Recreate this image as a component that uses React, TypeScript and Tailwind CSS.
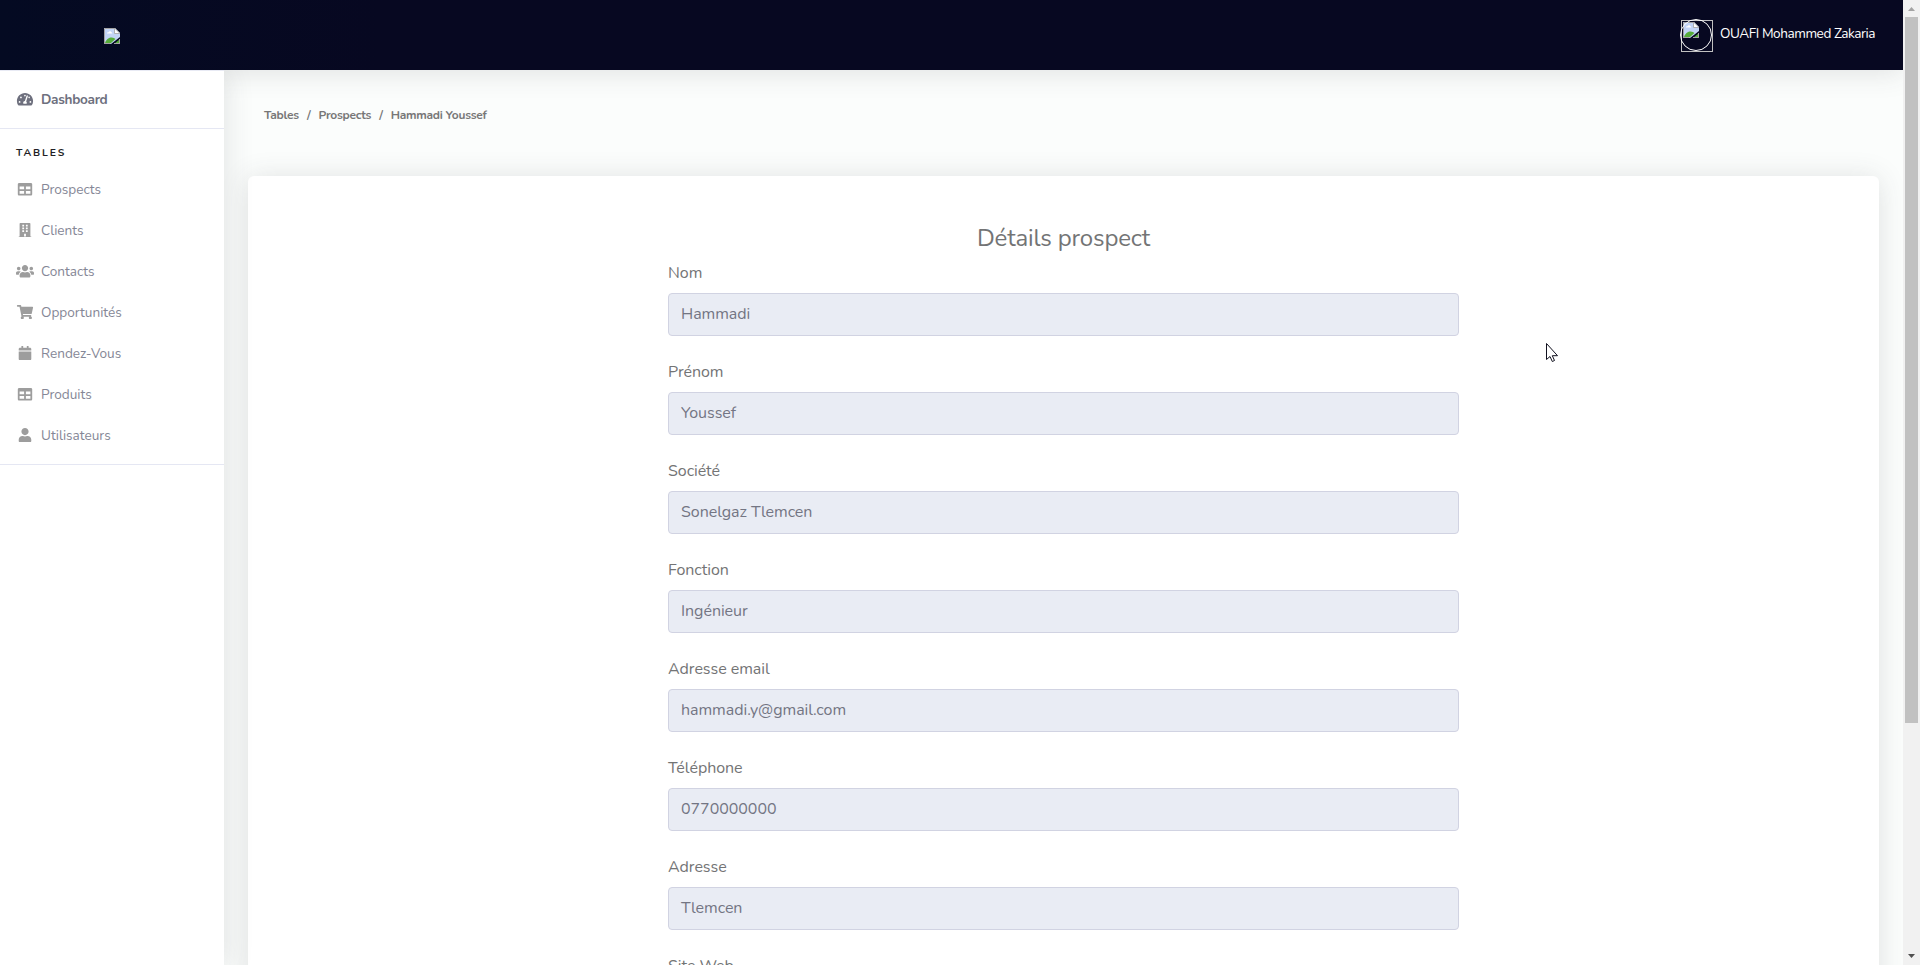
import React from "react";
import { FaTachometerAlt, FaTable, FaBuilding, FaUsers, FaShoppingCart, FaCalendar, FaUser } from "react-icons/fa";

const links = [
  { label: "Prospects", Icon: FaTable },
  { label: "Clients", Icon: FaBuilding },
  { label: "Contacts", Icon: FaUsers },
  { label: "Opportunités", Icon: FaShoppingCart },
  { label: "Rendez-Vous", Icon: FaCalendar },
  { label: "Produits", Icon: FaTable },
  { label: "Utilisateurs", Icon: FaUser },
];

const fields = [
  { label: "Nom", value: "Hammadi" },
  { label: "Prénom", value: "Youssef" },
  { label: "Société", value: "Sonelgaz Tlemcen" },
  { label: "Fonction", value: "Ingénieur" },
  { label: "Adresse email", value: "hammadi.y@gmail.com" },
  { label: "Téléphone", value: "0770000000" },
  { label: "Adresse", value: "Tlemcen" },
  { label: "Site Web", value: "" },
];

function BrokenImage() {
  return (
    <svg width="16" height="16" viewBox="0 0 16 16" className="block">
      <path d="M0 0h11l5 5v4L7 16H0z" fill="#c3d5f6" />
      <path d="M1 15c1.500-4 4-5.500 6.500-5.500 2 0 3 .8 4 1.500L7 15z" fill="#56ad3a" />
      <path d="M3 5.500c0-1 .8-1.500 1.600-1.300C5 3 7 3 7.200 4.300c.8 0 1.100.6 1 1.200z" fill="#fff" />
      <path d="M.5 16V.5H11M0 15.500h6.500" fill="none" stroke="#a3a3a3" />
      <path d="M10.500 0v5.500H16z" fill="#fff" stroke="#a3a3a3" strokeWidth=".8" />
      <path d="M16 11v5h-6z" fill="#56ad3a" />
      <path d="M10 15.500h6M15.500 11v5" stroke="#a3a3a3" />
    </svg>
  );
}

export default function App() {
  return (
    <div className="relative flex h-[965px] w-[1920px] overflow-hidden bg-[#fbfdfc] font-['Nunito','Lato',sans-serif] text-[#737475]">
      <div className="flex min-w-0 flex-1 flex-col overflow-hidden">
        <header className="relative z-20 flex h-[70px] shrink-0 items-start justify-between bg-linear-to-r from-[#040a22] to-[#070821] to-20% shadow-[0_2px_28px_0_rgba(58,59,69,0.15)]">
          <div className="flex w-56 justify-center pt-7">
            <BrokenImage />
          </div>
          <div className="flex pt-5 pr-7">
            <div className="relative size-8 shrink-0 border border-[#c0c0c0] p-px">
              <BrokenImage />
              <div className="absolute -top-[2px] -left-[2px] size-8 rounded-full border border-white" />
            </div>
            <span className="ml-[7px] w-[155px] text-[13.600px] leading-[28px] tracking-[-0.450px] whitespace-nowrap text-white">OUAFI Mohammed Zakaria</span>
          </div>
        </header>
        <div className="flex min-h-0 flex-1">
          <aside className="relative z-30 flex w-56 shrink-0 flex-col border-t border-[#e8eaf4] bg-white shadow-[0_2px_28px_0_rgba(58,59,69,0.15)] [clip-path:inset(0_-40px_0_0)]">
            <div className="flex h-[58px] items-center border-b border-[#e5e7f3] px-4 text-[13.600px] font-bold text-[#6e707e]">
              <FaTachometerAlt className="mr-[7px] mb-px w-[18px] text-[14.400px]" />
              <span className="pt-[2px] tracking-[-0.300px]">Dashboard</span>
            </div>
            <div className="px-4 pt-4 text-[10.400px] leading-4 font-bold tracking-[1.850px] text-[#1f1f26]">TABLES</div>
            <nav className="flex flex-col border-b border-[#e5e7f3] pt-2 pb-2">
              {links.map(({ label, Icon }) => (
                <div key={label} className="flex h-[41px] items-center px-4 text-[13.600px] text-[#858796]">
                  <Icon className="mr-[7px] mb-px w-[18px] text-[14.400px] text-[#9d9d9d]" />
                  <span className="pt-[2px]">{label}</span>
                </div>
              ))}
            </nav>
          </aside>
          <main className="flex min-w-0 flex-1 flex-col px-6">
            <div className="flex h-[106px] shrink-0 px-4 pt-9 text-[12px] leading-[18px] font-bold tracking-[-0.250px] text-[#777]">
              <span>Tables</span>
              <span className="mx-2">/</span>
              <span>Prospects</span>
              <span className="mx-2">/</span>
              <span>Hammadi Youssef</span>
            </div>
            <section className="flex h-[1200px] shrink-0 flex-col items-center rounded-md bg-white pt-12 shadow-[0_2px_28px_0_rgba(58,59,69,0.15)]">
              <h1 className="h-[37px] text-2xl leading-[29px] tracking-[-0.150px]">Détails prospect</h1>
              <div className="flex w-[791px] flex-col gap-6">
                {fields.map((f) => (
                  <div key={f.label} className="flex flex-col gap-2">
                    <label className="text-base leading-6 tracking-[-0.050px]">{f.label}</label>
                    <div className="flex h-[43px] items-center rounded-[4px] border border-[#d1d3e2] bg-[#e9ecf4] px-3 pb-[2px] text-base tracking-[-0.050px] text-[#737583]">{f.value}</div>
                  </div>
                ))}
              </div>
            </section>
          </main>
        </div>
      </div>
      <div className="flex w-[17px] shrink-0 flex-col items-center bg-[#f1f1f1]">
        <svg width="17" height="17" className="shrink-0"><path d="M5 11h7l-3.500-4z" fill="#a3a3a3" /></svg>
        <div className="h-[706px] w-[13px] bg-[#c1c1c1]" />
        <svg width="17" height="17" className="mt-auto shrink-0"><path d="M5 6h7l-3.500 4z" fill="#505050" /></svg>
      </div>
      <svg width="13" height="20" viewBox="0 0 13 20" className="absolute top-[343px] left-[1546px]">
        <path d="M.5.500v16l3.500-3 2.300 5 2.200-1-2.200-4.800h5.200z" fill="#fff" stroke="#11111f" />
      </svg>
    </div>
  );
}
